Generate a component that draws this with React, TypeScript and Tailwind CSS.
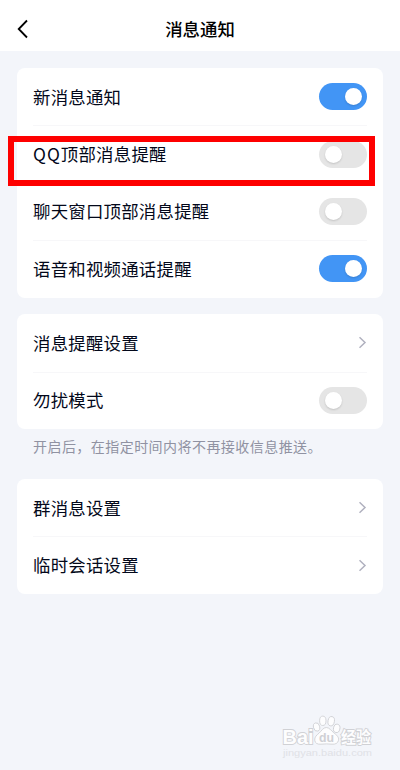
import React from 'react';

type Row = {
  label: string;
  on?: boolean;
  link?: boolean;
};

const alerts: Row[] = [
  { label: '新消息通知', on: true },
  { label: 'QQ顶部消息提醒', on: false },
  { label: '聊天窗口顶部消息提醒', on: false },
  { label: '语音和视频通话提醒', on: true },
];

const reminders: Row[] = [
  { label: '消息提醒设置', link: true },
  { label: '勿扰模式', on: false },
];

const chats: Row[] = [
  { label: '群消息设置', link: true },
  { label: '临时会话设置', link: true },
];

const Toggle: React.FC<{ on?: boolean }> = ({ on }) => (
  <button
    role="switch"
    aria-checked={!!on}
    className={`flex h-[27px] w-12 items-center rounded-full ${
      on ? 'justify-end bg-[#4295f5] pr-[5.5px]' : 'justify-start bg-[#e5e5e5] pl-[5.5px]'
    }`}
  >
    <span className="size-[17px] rounded-full bg-white shadow-[0_1px_2px_rgba(0,0,0,0.15)]" />
  </button>
);

const Chevron: React.FC = () => (
  <svg className="h-[13px] w-2" viewBox="0 0 8 13" fill="none" stroke="#b0b1bf" strokeWidth="1.5">
    <path d="M0.5 1.2l5.5 5.3L0.5 11.8" />
  </svg>
);

const Card: React.FC<{ rows: Row[] }> = ({ rows }) => (
  <section className="rounded-lg bg-white px-4">
    {rows.map((row, i) => (
      <div
        key={row.label}
        className={`flex h-[57.4px] items-center justify-between ${
          i < rows.length - 1 ? 'shadow-[0_1px_0_#f7f7f9]' : ''
        }`}
      >
        <span className="text-[17.4px] leading-6 tracking-[0.25px] text-[#03081a]">
          {row.label.startsWith('QQ') ? (
            <>
              <span className="tracking-[1px]">QQ</span>
              {row.label.slice(2)}
            </>
          ) : (
            row.label
          )}
        </span>
        {row.link ? <Chevron /> : <Toggle on={row.on} />}
      </div>
    ))}
  </section>
);

const Watermark: React.FC = () => (
  <svg
    className="absolute top-[712px] left-[280px] h-[50px] w-[96px] font-['Liberation_Sans','Noto_Sans_CJK_SC',sans-serif]"
    viewBox="280 712 96 50"
    fill="#fdfdfe"
    stroke="#d0d1d5"
    strokeWidth="0.9"
  >
    <g paintOrder="stroke">
      <text x="282.5" y="743.5" fontSize="19.5" fontWeight="bold" strokeWidth="1.8" textLength="31" lengthAdjust="spacingAndGlyphs">
        Bai
      </text>
      <text x="341" y="742.5" fontSize="15.5" fontWeight="bold" strokeWidth="1.8" textLength="30" lengthAdjust="spacingAndGlyphs">
        经验
      </text>
      <text x="283" y="756" fontSize="9" fill="#e0e1e6" stroke="none" textLength="89" lengthAdjust="spacingAndGlyphs">
        jingyan.baidu.com
      </text>
    </g>
    {/* paw */}
    <ellipse cx="316.6" cy="727" rx="3.1" ry="4.2" transform="rotate(-15 316.6 727)" />
    <ellipse cx="322.8" cy="720.8" rx="3.2" ry="4.7" />
    <ellipse cx="331.2" cy="721.2" rx="3.2" ry="4.7" transform="rotate(10 331.2 721.2)" />
    <ellipse cx="336.7" cy="728.4" rx="3.2" ry="4.2" transform="rotate(12 336.7 728.4)" />
    <path d="M326.3 727.5c3.2 0 5 3.3 7.5 5.3c3 2.3 5.3 4.3 4.7 7.5c-.6 3-3.2 4.2-6.5 3.9c-3.500-.4-7.500-.4-11 0c-3.400.3-6-.8-6.300-4.100c-.2-3.200 2-5 4.500-7.100c2.400-2.200 3.900-5.500 7.100-5.500z" />
    <text x="319" y="742" fontSize="13" fontWeight="bold" fill="#cfd0d4" stroke="none" textLength="15" lengthAdjust="spacingAndGlyphs">
      du
    </text>
  </svg>
);

const App: React.FC = () => {
  return (
    <div className="relative h-[770px] w-[400px] overflow-hidden bg-[#f3f5fa] font-['Noto_Sans_CJK_SC',sans-serif]">
      <header className="grid h-[51px] grid-cols-[1fr_auto_1fr] items-center bg-white pt-[7px]">
        <svg className="ml-[17px] h-5 w-3" viewBox="0 0 12 20" fill="none" stroke="#000" strokeWidth="1.8">
          <path d="M10 1.5L1.7 10L10 18.5" />
        </svg>
        <h1 className="pb-px text-[17.4px] leading-6 font-medium text-black">消息通知</h1>
      </header>

      <main className="flex flex-col px-[17px] pt-[17px]">
        <Card rows={alerts} />
        <div className="mt-[16.6px]">
          <Card rows={reminders} />
        </div>
        <p className="mt-[7px] mb-[23px] px-4 text-[14px] leading-5 tracking-[0.45px] text-[#9092a2]">
          开启后，在指定时间内将不再接收信息推送。
        </p>
        <Card rows={chats} />
      </main>

      {/* highlight around the QQ banner row */}
      <div className="absolute top-[136px] left-[8px] h-[50px] w-[367px] border-6 border-[#fe0000]" />
      <Watermark />
    </div>
  );
};

export default App;
